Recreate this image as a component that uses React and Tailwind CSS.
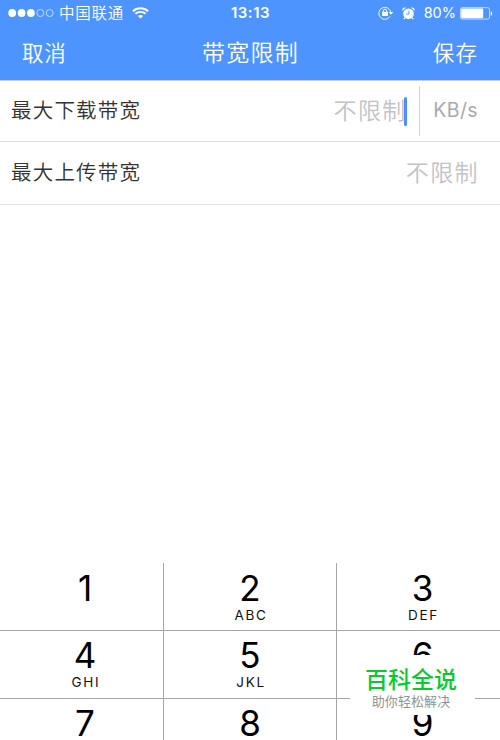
const rows = [
  [
    { digit: '1', letters: '' },
    { digit: '2', letters: 'ABC' },
    { digit: '3', letters: 'DEF' },
  ],
  [
    { digit: '4', letters: 'GHI' },
    { digit: '5', letters: 'JKL' },
    { digit: '6', letters: 'MNO' },
  ],
  [
    { digit: '7', letters: '' },
    { digit: '8', letters: '' },
    { digit: '9', letters: '' },
  ],
];

const columnStyles = ['pl-[7px] border-r', 'border-r', 'pl-[8px]'];
const rowStyles = ['h-[68px] border-b', 'h-[68px] border-b', 'h-[41px]'];
const keyStyles = ['pt-[6px]', 'pt-[5px]', 'pt-[5px]'];

function SignalDots() {
  return (
    <svg width="46" height="10" viewBox="0 0 46 10" fill="none">
      <circle cx="4.2" cy="5" r="3.9" fill="white" />
      <circle cx="13.6" cy="5" r="3.9" fill="white" />
      <circle cx="22.9" cy="5" r="3.9" fill="white" />
      <circle cx="32.3" cy="5" r="3.5" stroke="white" strokeOpacity="0.8" strokeWidth="0.8" />
      <circle cx="41.7" cy="5" r="3.5" stroke="white" strokeOpacity="0.8" strokeWidth="0.8" />
    </svg>
  );
}

function WifiIcon() {
  return (
    <svg width="17" height="12" viewBox="0 0 17 12" fill="none" stroke="white" strokeWidth="1.9">
      <path d="M0.9 4.2C5.1 0.2 11.9 0.2 16.1 4.2" />
      <path d="M3.4 6.8C6.2 4.2 10.8 4.2 13.6 6.8" />
      <path d="M5.8 9L8.5 11.6L11.2 9C9.7 7.7 7.3 7.7 5.8 9Z" fill="white" stroke="none" />
    </svg>
  );
}

function RotationLockIcon() {
  return (
    <svg width="16" height="14" viewBox="0 0 16 14" fill="none" stroke="white">
      <path d="M12 10.4A6 6 0 1 1 12.7 6" strokeWidth="0.9" />
      <path d="M10.6 5.9H15.4L13 8.8Z" fill="white" stroke="none" />
      <rect x="4.1" y="5.8" width="5.8" height="4.2" rx="0.4" fill="white" stroke="none" />
      <path d="M5.3 6.2V4.9A1.7 1.7 0 0 1 8.7 4.9V6.2" strokeWidth="1" />
    </svg>
  );
}

function AlarmIcon() {
  return (
    <svg width="13" height="13" viewBox="0 0 13 13" fill="none">
      <circle cx="6.5" cy="6.8" r="5.3" fill="white" />
      <path d="M0.6 3.3A3 3 0 0 1 3.4 0.8M12.4 3.3A3 3 0 0 0 9.6 0.8" stroke="white" strokeWidth="1.3" />
      <path d="M2.8 10.8L1.7 12.2M10.2 10.8L11.3 12.2" stroke="white" strokeWidth="1.3" />
      <path d="M6.9 3.6V7.1H4.2" stroke="#4d94ff" strokeWidth="0.9" />
    </svg>
  );
}

function BatteryIcon() {
  return (
    <svg width="33" height="13" viewBox="0 0 33 13" fill="none">
      <rect x="0.5" y="0.7" width="29" height="11.4" rx="1.8" stroke="white" strokeOpacity="0.75" strokeWidth="0.9" />
      <rect x="1.2" y="1.5" width="22" height="9.8" rx="1" fill="white" />
      <path d="M30.8 4.2C32.6 4.9 32.6 8.1 30.8 8.8Z" fill="white" />
    </svg>
  );
}

function StatusBar() {
  return (
    <div className="h-[26px] grid grid-cols-[1fr_auto_1fr] items-center pl-[8px] pr-[7px] text-white">
      <div className="flex items-center">
        <SignalDots />
        <span className="ml-[5px] pt-[2px] text-[15.5px] leading-[24px] tracking-[0.75px] font-[350]">中国联通</span>
        <span className="ml-[8px]">
          <WifiIcon />
        </span>
      </div>
      <span className="text-[15px] leading-[26px] font-semibold tracking-[0.5px]">13:13</span>
      <div className="flex items-center justify-end">
        <RotationLockIcon />
        <span className="ml-[8px]">
          <AlarmIcon />
        </span>
        <span className="ml-[9px] text-[14.5px] leading-[26px]">80%</span>
        <span className="ml-[4px]">
          <BatteryIcon />
        </span>
      </div>
    </div>
  );
}

function NavBar() {
  return (
    <div className="h-[54px] grid grid-cols-[1fr_auto_1fr] items-center px-[22px] text-white">
      <span className="text-[21.5px] tracking-[0.7px] font-[350]">取消</span>
      <span className="pl-[1px] text-[23px] tracking-[1.3px] font-[350]">带宽限制</span>
      <span className="text-[21.5px] tracking-[1.1px] font-[350] text-right">保存</span>
    </div>
  );
}

function Key({ digit, letters, className }) {
  return (
    <div className={`flex flex-col items-center border-[#a6a6a6] ${className}`}>
      <span className="text-[35px] leading-[38px] text-black">{digit}</span>
      {letters && (
        <span className="mt-[1px] text-[13.5px] leading-[14px] tracking-[1.7px] pl-[2px] text-[#111111]">
          {letters}
        </span>
      )}
    </div>
  );
}

export default function App() {
  return (
    <div className="relative w-[500px] h-[740px] overflow-hidden bg-white flex flex-col font-['Inter','Noto_Sans_CJK_SC',sans-serif]">
      <header className="h-[80px] shrink-0 bg-[#4d94ff]">
        <StatusBar />
        <NavBar />
      </header>

      <div className="h-[62px] shrink-0 flex items-center border-t border-b border-t-[#c3cde0] border-b-[#dedede] pl-[11px] pr-[22px]">
        <span className="flex-1 text-[20.5px] tracking-[1.2px] font-[350] text-[#333333]">最大下载带宽</span>
        <span className="text-[23px] tracking-[1.4px] font-[350] text-[#c2c2c8]">不限制</span>
        <span className="-ml-[3px] w-[3px] h-[29px] bg-[#4a8ffc] rounded-full" />
        <span className="ml-[12px] w-[1.5px] h-[50px] bg-[#d4d4d8]" />
        <span className="ml-[13px] text-[19.5px] tracking-[0.4px] text-[#aaaaad]">KB/s</span>
      </div>
      <div className="h-[63px] shrink-0 flex items-center border-b border-[#dedede] pl-[11px] pr-[21px]">
        <span className="flex-1 text-[20.5px] tracking-[1.2px] font-[350] text-[#333333]">最大上传带宽</span>
        <span className="text-[23px] tracking-[1.4px] font-[350] text-[#c2c2c8]">不限制</span>
      </div>

      <div className="flex-1" />

      {/* Number pad, the last row runs off the screen */}
      <div className="h-[177px] shrink-0">
        {rows.map((keys, i) => (
          <div key={i} className={`grid grid-cols-[164px_173px_163px] border-[#a6a6a6] ${rowStyles[i]}`}>
            {keys.map((key, j) => (
              <Key key={key.digit} {...key} className={`${keyStyles[i]} ${columnStyles[j]}`} />
            ))}
          </div>
        ))}
      </div>

      {/* Site badge over the keypad */}
      <div className="absolute left-[350px] top-[655px] w-[125px] h-[60px] pr-[3px] bg-white flex flex-col items-center">
        <span className="mt-[11px] text-[23px] leading-[28px] font-medium text-[#0ac82f]">百科全说</span>
        <span className="text-[13px] leading-[15px] tracking-[0.1px] text-[#929292]">助你轻松解决</span>
      </div>
    </div>
  );
}
